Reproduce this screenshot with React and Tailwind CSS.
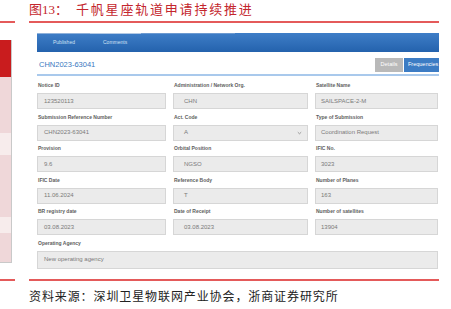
import React from "react";

function Field({ label, value, span, pad = "pl-[6px]", select, tall }) {
  return (
    <div className={span ? "col-span-3 flex flex-col" : "flex flex-col"}>
      <div className="h-[8px] leading-[8px] pl-[1px] text-[5px] font-bold text-[#5e5e5e] whitespace-nowrap">{label}</div>
      <div
        className={`mt-[4px] ${tall ? "h-[18px]" : "h-[16px]"} flex items-center justify-between ${pad} pr-[4px] bg-[#ebebeb] border border-[#d6d6d6] text-[6px] text-[#7a7a7a] whitespace-nowrap`}
      >
        <span>{value}</span>
        {select && (
          <svg width="5" height="4" viewBox="0 0 5 4" className="mr-[1px]">
            <path d="M0.8 1.2 L2.5 2.8 L4.2 1.2" stroke="#888" strokeWidth="0.8" fill="none" />
          </svg>
        )}
      </div>
    </div>
  );
}

export default function App() {
  return (
    <div className="w-[451px] h-[309px] bg-white overflow-hidden font-['Liberation_Sans',sans-serif]">
      {/* Title */}
      <div className="h-[21px] pl-[29px] pt-[2px] text-[13px] leading-[16px] text-[#c4262d] font-['Liberation_Serif','Noto_Sans_CJK_SC',serif] whitespace-nowrap">
        图13：<span className="ml-[8px] tracking-[1.8px]">千帆星座轨道申请持续推进</span>
      </div>
      <div className="flex h-[2px]">
        <div className="w-[15px] bg-[#e45a5a]" />
        <div className="ml-[14px] w-[410px] bg-[#e45a5a]" />
      </div>

      {/* Body */}
      <div className="flex items-start mt-[10px] h-[243px]">
        {/* left strip */}
        <div className="mt-[7px] w-[12px] h-[223px] flex flex-col border-r border-b border-[#c9c9c9]">
          <div className="h-[37px] bg-[#c91c1e]" />
          <div className="h-[56px] bg-[#efd7d9]" />
          <div className="h-[22px] bg-[#f7ecec]" />
          <div className="h-[62px] bg-[#efd7d9]" />
          <div className="h-[16px] bg-[#f7ecec]" />
          <div className="flex-1 bg-[#efd7d9]" />
        </div>

        {/* screenshot */}
        <div className="ml-[25px] w-[402px] h-[243px] flex flex-col overflow-hidden">
          <div className="h-[19px] bg-gradient-to-b from-[#3e7ec7] to-[#2462ad] flex items-stretch">
            <div className="w-[53px] pl-[16px] border-t border-[#8fb1da] flex items-center text-[5px] text-[#cfe0f4]">
              Published
            </div>
            <div className="w-[51px] pl-[13px] border-t border-[#b3c9e4] flex items-center text-[5px] text-[#cfe0f4]">
              Comments
            </div>
            <div className="w-[94px] border-t border-[#6d9ad0]" />
          </div>

          <div className="h-[22px] flex items-center justify-between">
            <div className="pl-[2px] pt-[4px] text-[7.5px] text-[#3b78c0]">CHN2023-63041</div>
            <div className="flex pt-[3px] mr-[-10px]">
              <div className="w-[28px] h-[14px] bg-[#b9b9b9] flex items-center justify-center text-[5.5px] text-white">
                Details
              </div>
              <div className="ml-[1px] w-[45px] h-[14px] bg-[#3c7cc4] flex items-center pl-[4px] text-[5.5px] text-white">
                Frequencies
              </div>
            </div>
          </div>
          <div className="h-[2px] bg-[#a9c9ec]" />

          <div className="pt-[5px] grid grid-cols-[129px_135px_123px] gap-x-[7px] gap-y-[3.5px]">
            <Field label="Notice ID" value="123520113" />
            <Field label="Administration / Network Org." value="CHN" pad="pl-[10px]" />
            <Field label="Satellite Name" value="SAILSPACE-2-M" pad="pl-[5px]" />

            <Field label="Submission Reference Number" value="CHN2023-63041" />
            <Field label="Act. Code" value="A" pad="pl-[10px]" select />
            <Field label="Type of Submission" value="Coordination Request" pad="pl-[5px]" />

            <Field label="Provision" value="9.6" />
            <Field label="Orbital Position" value="NGSO" pad="pl-[10px]" />
            <Field label="IFIC No." value="3023" pad="pl-[5px]" />

            <Field label="IFIC Date" value="11.06.2024" />
            <Field label="Reference Body" value="T" pad="pl-[10px]" />
            <Field label="Number of Planes" value="163" pad="pl-[5px]" />

            <Field label="BR registry date" value="03.08.2023" />
            <Field label="Date of Receipt" value="03.08.2023" pad="pl-[10px]" />
            <Field label="Number of satellites" value="13904" pad="pl-[5px]" />

            <Field label="Operating Agency" value="New operating agency" span tall />
          </div>
        </div>
      </div>

      {/* bottom red line */}
      <div className="flex h-[2px] mt-[3px]">
        <div className="w-[15px] bg-[#e45a5a]" />
        <div className="ml-[14px] w-[410px] bg-[#e45a5a]" />
      </div>

      <div className="mt-[9px] pl-[29px] text-[12px] leading-[14px] tracking-[0.9px] text-[#222] font-['Liberation_Serif','Noto_Sans_CJK_SC',serif] whitespace-nowrap">
        资料来源：深圳卫星物联网产业协会，浙商证券研究所
      </div>
    </div>
  );
}
